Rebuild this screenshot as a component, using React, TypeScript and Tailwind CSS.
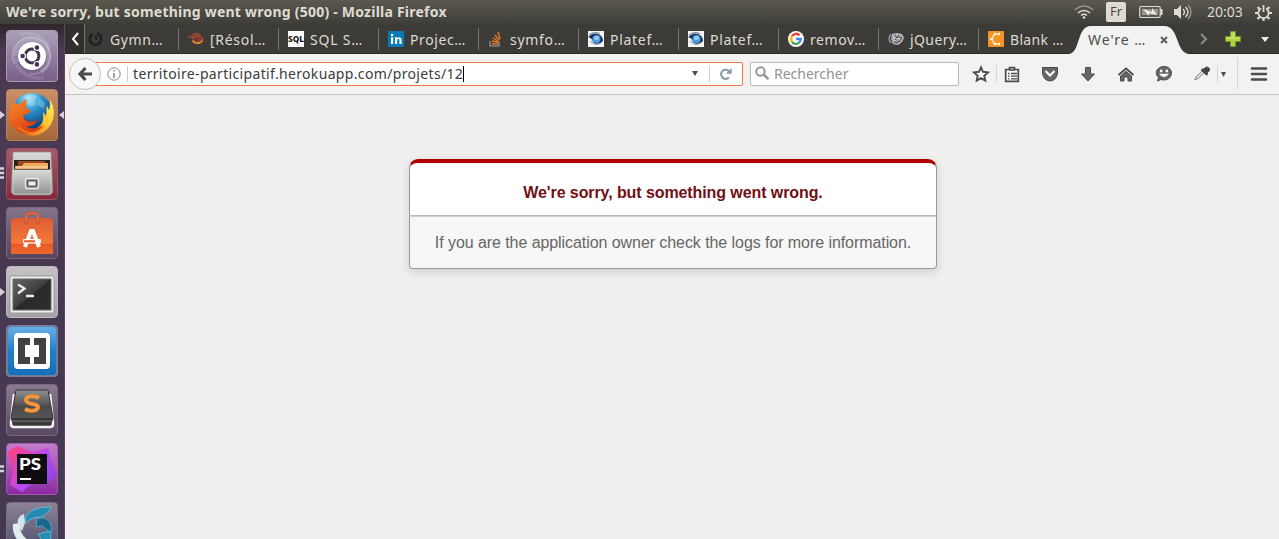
import type { ReactNode } from "react";

const uiFont = "font-['Noto_Sans','Open_Sans',sans-serif]";

function Launcher({ kind }: { kind: string }) {
  switch (kind) {
    case "ubuntu":
      return (
        <svg viewBox="0 0 52 52" className="size-[52px] shrink-0">
          <g fill="none" stroke="#fff">
            <path d="M9 26a17 17 0 0 1 31-10c6 9 3 21-5 26" strokeWidth="4" opacity=".15" />
            <path d="M8 34C2 17 16 4 30 8c10 3 15 11 14 21M44 22c2 14-8 23-20 22" strokeWidth="1.2" opacity=".28" />
            <path d="M9 28c0 13 15 22 29 20M43 21C43 8 26 0 14 5" strokeWidth="3" opacity=".12" />
          </g>
          <circle cx="26" cy="27" r="14.3" fill="#3b2b4b" opacity=".25" />
          <circle cx="26" cy="26" r="14" fill="#fff" />
          <circle cx="26" cy="26" r="6.9" fill="none" stroke="#443653" strokeWidth="3" />
          <g stroke="#fff" strokeWidth="1.2" fill="#443653">
            <circle cx="16.6" cy="26" r="2.9" />
            <circle cx="30.9" cy="17.6" r="2.9" />
            <circle cx="30.9" cy="34.4" r="2.9" />
          </g>
        </svg>
      );
    case "firefox":
      return (
        <svg viewBox="0 0 52 52" className="size-[52px] shrink-0">
          <defs>
            <radialGradient id="globe" cx=".42" cy=".12" r=".8"><stop stopColor="#a5e6f7" /><stop offset=".4" stopColor="#2b92ce" /><stop offset="1" stopColor="#0b326c" /></radialGradient>
            <linearGradient id="fox" x2=".6" y2="1"><stop stopColor="#f18b2f" /><stop offset=".5" stopColor="#ec641d" /><stop offset="1" stopColor="#d93a10" /></linearGradient>
            <linearGradient id="tail" x1="1" x2="0" y2="1"><stop stopColor="#fff16a" /><stop offset=".45" stopColor="#f9c52c" /><stop offset="1" stopColor="#e85418" /></linearGradient>
          </defs>
          <circle cx="26" cy="25" r="21" fill="url(#globe)" />
          <path d="M18 8c4-3 11-3 14 0l-4 4 2 4-6 1-4-4zM33 9l6 5-1 6-6-4z" fill="#c5eff9" opacity=".3" />
          <path d="M44 11c7 10 4 25-5 31-9 8-23 5-29-3 12 4 22 2 26-5 2-4 1-8 1-11l3 4c1-4 0-8 1-10l2 4c1-3 1-6 1-10z" fill="url(#tail)" />
          <path d="M8 12c1 2 3 3 5 3 3-1 4-4 8-5-1 4-1 7-1 9 2 1 4 2 5 3-2 3-6 3-8 5 1 6 8 7 14 4-2 5-7 7-11 6 5 4 12 3 17-1-3 9-22 14-31 1C1 29 4 18 8 12z" fill="url(#fox)" />
          <path d="M18 28c1 7 9 6 13 3" fill="none" stroke="#bb3410" strokeWidth="1" />
          <path d="M12 38q13 12 27 0" fill="none" stroke="#f6982d" strokeWidth="2" opacity=".6" />
        </svg>
      );
    case "files":
      return (
        <svg viewBox="0 0 52 52" className="size-[52px] shrink-0">
          <defs><linearGradient id="cab" x2="0" y2="1"><stop stopColor="#dbdbd9" /><stop offset="1" stopColor="#929290" /></linearGradient></defs>
          <path d="M7 4h38l2 40-4 3H9l-4-3z" fill="url(#cab)" stroke="#888" strokeWidth=".7" />
          <path d="M8 12h36v10H8z" fill="#272321" /><path d="M12 13h27v8H12z" fill="#a2451f" />
          <path d="M9 18h7l2-3h24v6H9z" fill="#efaa63" /><path d="M10 19h32" stroke="#ffe0ad" />
          <path d="M7 22h38v24H7z" fill="url(#cab)" stroke="#ddd" strokeWidth=".7" />
          <rect x="19.5" y="30.5" width="13" height="10" rx="2" fill="#777" stroke="#eee" strokeWidth="1.3" />
          <rect x="22" y="33" width="8" height="5" rx="1" fill="#eee" stroke="#555" />
        </svg>
      );
    case "software":
      return (
        <svg viewBox="0 0 52 52" className="size-[52px] shrink-0">
          <defs><linearGradient id="bag" x2="0" y2="1"><stop stopColor="#dc5d35" /><stop offset=".7" stopColor="#f47a39" /><stop offset=".72" stopColor="#ea5725" /><stop offset="1" stopColor="#ee692d" /></linearGradient></defs>
          <path d="M5 13l3-2h36l3 2v34H5z" fill="url(#bag)" />
          <path d="M20 17V9c0-4 12-4 12 0v8" fill="none" stroke="#c84d28" strokeWidth="3" />
          <path d="M20 16V9c0-4 12-4 12 0v7" fill="none" stroke="#f18a60" strokeWidth="1" />
          <path d="M19 40l6-16h2l6 16" fill="none" stroke="#fff" strokeWidth="4" />
          <rect x="17" y="32" width="18" height="4.5" rx="1" fill="#fff" /><path d="M18 34.2h11" stroke="#e65829" strokeWidth="2" />
        </svg>
      );
    case "terminal":
      return (
        <svg viewBox="0 0 52 52" className="size-[52px] shrink-0">
          <defs><linearGradient id="term" x2="1" y2="1"><stop stopColor="#666" /><stop offset=".5" stopColor="#3d3d3d" /><stop offset=".51" stopColor="#292929" /><stop offset="1" stopColor="#303030" /></linearGradient></defs>
          <rect x="4" y="10" width="44" height="37" rx="2" fill="#ededeb" stroke="#999" />
          <rect x="7" y="13" width="38" height="31" fill="url(#term)" stroke="#666" />
          <path d="M12 18.5l6.5 4-6.5 5M20 30h8" stroke="#eee" strokeWidth="2.3" fill="none" />
        </svg>
      );
    case "brackets":
      return (
        <svg viewBox="0 0 52 52" className="size-[52px] shrink-0">
          <defs><linearGradient id="blue" x2="0" y2="1"><stop stopColor="#68afe5" /><stop offset=".5" stopColor="#1f7fcb" /><stop offset="1" stopColor="#176fb8" /></linearGradient></defs>
          <rect x="2" y="2" width="48" height="48" rx="4" fill="url(#blue)" />
          <rect x="8" y="8" width="36" height="36" rx="4" fill="#fff" />
          <path d="M12 13h12v7h-5v12h5v7H12zM40 13H28v7h5v12h-5v7h12z" fill="#424242" />
        </svg>
      );
    case "sublime":
      return (
        <svg viewBox="0 0 52 52" className="size-[52px] shrink-0">
          <defs><linearGradient id="key" x2="0" y2="1"><stop stopColor="#929292" /><stop offset=".5" stopColor="#4c4c4c" /><stop offset="1" stopColor="#595959" /></linearGradient></defs>
          <path d="M8 10L5 40q0 3 3 3h36q3 0 3-3l-3-30" fill="#393939" stroke="#f3f3f3" strokeWidth="2.6" />
          <path d="M10 6h32l5 28-2 5H7l-2-5z" fill="url(#key)" stroke="#333" />
          <path d="M6 35h40" stroke="#353535" strokeWidth="2" />
          <path d="M33 14c-5-3-13-2-13 2 0 5 12 3 12 7 0 4-8 5-13 2" fill="none" stroke="#f7943a" strokeWidth="4" />
        </svg>
      );
    case "phpstorm":
      return (
        <svg viewBox="0 0 52 52" className="size-[52px] shrink-0">
          <defs><linearGradient id="storm" x2="1" y2=".7"><stop stopColor="#ff4268" /><stop offset=".35" stopColor="#e341bd" /><stop offset=".6" stopColor="#b64cf2" /><stop offset="1" stopColor="#8c43ed" /></linearGradient></defs>
          <path d="M2 9l9-6 15 6 16-4 3 12 5 15-10 9-10-4-14 12-12-7 3-14z" fill="url(#storm)" />
          <rect x="11" y="11" width="30" height="30" fill="#100d12" />
          <text x="13" y="26.5" fill="#fff" fontFamily="Lato, sans-serif" fontWeight="900" fontSize="17" textLength="22" lengthAdjust="spacingAndGlyphs">PS</text>
          <path d="M14 36h11" stroke="#fff" strokeWidth="2" />
        </svg>
      );
    default:
      return (
        <svg viewBox="0 0 52 52" className="size-[52px] shrink-0">
          <path d="M19 17C22 7 33 5 45 5c-1 4-5 8-10 10-6 0-11 2-15 6z" fill="#258bb2" stroke="#72b7d1" />
          <path d="M18 12C10 15 10 22 16 29l3-8z" fill="#d0e3e9" />
          <path d="M7 22c-1 10 4 18 12 22l4-5c-7-5-10-11-9-18z" fill="#e1ecef" />
          <path d="M31 17c10-4 16 4 14 14l-9-7-6 1z" fill="#1b668f" stroke="#4fa6c6" />
          <path d="M44 29c3 9-2 16-8 20 1-7 0-12-4-17z" fill="#248db5" stroke="#65b4cc" />
        </svg>
      );
  }
}

const launchers = [
  { kind: "ubuntu", bg: "bg-linear-to-b from-[#aaa0b9] to-[#79608b] border-[#a99cb5]", left: 0 },
  { kind: "firefox", bg: "bg-linear-to-b from-[#c69068] to-[#a66738] border-[#b58562]", left: 1 },
  { kind: "files", bg: "bg-linear-to-b from-[#a55b6c] to-[#83283a] border-[#9e5163]", left: 3 },
  { kind: "software", bg: "bg-linear-to-b from-[#85758b] to-[#56455e] border-[#766680]", left: 0 },
  { kind: "terminal", bg: "bg-linear-to-b from-[#c5c2c6] to-[#a4a1a5] border-[#bcb8be]", left: 1 },
  { kind: "brackets", bg: "bg-[#687fa3] border-[#7d7d9f]", left: 0 },
  { kind: "sublime", bg: "bg-linear-to-b from-[#89798f] to-[#5b4863] border-[#78677f]", left: 0 },
  { kind: "phpstorm", bg: "bg-linear-to-b from-[#c37bcc] to-[#8b2ba2] border-[#a858b5]", left: 2 },
  { kind: "swirl", bg: "bg-linear-to-b from-[#8c8394] to-[#4b4d6b] border-[#776f84]", left: 0 },
];

function Sidebar() {
  return (
    <aside className="relative flex w-[65px] shrink-0 flex-col items-center gap-[7px] overflow-hidden border-r border-[#64455f] bg-linear-to-b from-[#32262d] via-[#4a3951] via-[5%] to-[#453852] pr-px pt-[6px]">
      {launchers.map(({ kind, bg, left }) => (
        <div key={kind} className="relative flex w-full shrink-0 justify-center">
          <div className={`flex size-[52px] items-center justify-center overflow-hidden rounded-[4px] border ${bg}`}><Launcher kind={kind} /></div>
          {left === 1 && <svg className="absolute left-0 top-[22px]" width="5" height="8"><path d="M0 0l5 4-5 4z" fill="#d7d0d8" /></svg>}
          {left > 1 && <svg className="absolute left-0 top-[19px]" width="5" height="12"><path d={left === 3 ? "M0 1.5h4M0 6h4M0 10.5h4" : "M0 4.5h4M0 9h4"} stroke="#d7d0d8" strokeWidth="2.3" /></svg>}
          {kind === "firefox" && <svg className="absolute -right-px top-[22px]" width="5" height="8"><path d="M5 0L0 4l5 4z" fill="#d7d0d8" /></svg>}
        </div>
      ))}
    </aside>
  );
}

function Favicon({ kind }: { kind: string }) {
  const marks: Record<string, ReactNode> = {
    gym: <><circle cx="7.5" cy="8" r="5.7" fill="none" stroke="#22211f" strokeWidth="2.8" /><path d="M7 0v8" stroke="#3c3b37" strokeWidth="4" /><path d="M8 4v5" stroke="#22211f" strokeWidth="2" /></>,
    resolved: <g fill="none" strokeWidth="1.8" strokeDasharray="2 .8"><ellipse cx="9.5" cy="8.5" rx="5" ry="4" stroke="#cf4b22" /><path d="M0 7q3-3 6 0M4 4q5-3 8 0" stroke="#a54d37" /><path d="M5 10q4 4 9 0" stroke="#f5a62c" /><path d="M7 7q4-2 5 1q-3 3-5 0" stroke="#a83d34" /></g>,
    sql: <><rect width="16" height="16" fill="#fff" /><text x="0" y="11.2" textLength="16" lengthAdjust="spacingAndGlyphs" fill="#111" fontFamily="Noto Sans, sans-serif" fontSize="9" fontWeight="800">SQL</text></>,
    linkedin: <><rect width="16" height="16" rx="1" fill="#0879b9" /><rect x="3" y="6.2" width="2.2" height="6.8" fill="#fff" /><circle cx="4.1" cy="4" r="1.3" fill="#fff" /><path d="M7 13V6.2h2.1v1c1-1.7 4.5-1.5 4.5 1.6V13h-2.2V9.1c0-1.7-2.2-1.5-2.2.1V13z" fill="#fff" /></>,
    stack: <><path d="M2 10v5h9v-5" fill="none" stroke="#aaa69f" strokeWidth="1.1" /><path d="M4 12.7h6M4 10l6 1M5 7l5 3M7 4l4 5M10 1l2 7" stroke="#e87722" strokeWidth="1.4" /></>,
    plateforme: <><rect width="16" height="16" fill="#f5f5f5" /><path d="M1 10q4 5 9 4 4-1 5-5" fill="#b9bdc5" /><path d="M0 6Q5 1 10 3q5 2 5 7-4 4-9 2-2-5-6-6" fill="#18315f" /><circle cx="8.5" cy="8" r="4" fill="#459de6" /><ellipse cx="8.5" cy="7" rx="2.5" ry="2" fill="#93cff6" /><path d="M1 4Q7 0 12 3" stroke="#848ea2" strokeWidth="1.2" fill="none" /></>,
    google: <><circle cx="8" cy="8" r="8" fill="#fff" /><g fill="none" strokeWidth="2.4"><path d="M4 5.2a4.8 4.8 0 0 1 7.6-.9" stroke="#e94235" /><path d="M4 5.2a5 5 0 0 0 0 5.8" stroke="#fbbc05" /><path d="M4 11a4.8 4.8 0 0 0 7.2.5" stroke="#34a853" /><path d="M11.2 11.5A5 5 0 0 0 12.8 8H8" stroke="#4285f4" /></g></>,
    jquery: <><path d="M4 3l5-1 5 1 2 4-2 4-4 3-5-1-2-5z" fill="#b4b8bd" /><path d="M3 3q-4 5 0 9M6 4q-3 5 0 9" fill="none" stroke="#a4a8ac" strokeWidth="1.2" /><path d="M7 4l2 3 2-3M7 8l4 3 3-4M6 11l4 1M11 6l3 1" stroke="#343a43" strokeWidth="1" fill="none" /><circle cx="9" cy="9" r="1" fill="#bc8f5b" /></>,
    blank: <><rect width="16" height="16" rx="1" fill="#f79420" /><path d="M10 3H7L5 5v2L3 8l2 1v2l2 2h3" stroke="#fff" strokeWidth="1.1" fill="none" /><g fill="#fff"><circle cx="7" cy="3" r="1.2" /><circle cx="11" cy="3" r="1.2" /><circle cx="3" cy="8" r="1.2" /><circle cx="11" cy="13" r="1.2" /><circle cx="7" cy="13" r="1.2" /></g></>,
  };
  return <svg width="16" height="16" className="shrink-0 overflow-visible">{marks[kind]}</svg>;
}

const tabs = [
  ["resolved", "[Résol…", "tracking-[0.7px]"],
  ["sql", "SQL S…", "tracking-[0.8px]"],
  ["linkedin", "Projec…", "tracking-[0.6px]"],
  ["stack", "symfo…", "tracking-[0.7px]"],
  ["plateforme", "Platef…", "tracking-[0.7px]"],
  ["plateforme", "Platef…", "tracking-[0.7px]"],
  ["google", "remov…", "tracking-[0.6px]"],
  ["jquery", "jQuery…", "tracking-[0.4px]"],
  ["blank", "Blank …", "tracking-[0.3px]"],
];

function TabBar() {
  return (
    <div className="flex h-[30px] shrink-0 border-b border-[#292824] bg-[#3c3b37] pt-px text-[14px] text-[#dfdbd2]">
      <div className="-mt-px flex w-5 shrink-0 items-center justify-center border-r border-[#77756f] bg-[#302f2c] pt-px"><svg width="8" height="14"><path d="M7 1L2 7l5 6" fill="none" stroke="#fff" strokeWidth="2" /></svg></div>
      <div className="flex w-[93px] shrink-0 items-center gap-[6px] pl-[3px]"><Favicon kind="gym" /><span className="tracking-[0.6px]">Gymn…</span></div>
      {tabs.map(([kind, label, track], i) => (
        <div key={i} className={`flex shrink-0 items-center ${i === 8 ? "w-[90px]" : "w-[100px]"}`}>
          <span className="h-[22px] w-px bg-[#77756f]" />
          <span className="ml-[9px]"><Favicon kind={kind} /></span>
          <span className={`ml-[6px] whitespace-nowrap ${track}`}>{label}</span>
        </div>
      ))}
      <div className="relative -mt-px -mb-px flex w-[122px] shrink-0 items-center text-[#4c4c4c]">
        <svg className="absolute inset-0" width="122" height="30"><path d="M0 30C13 30 8 2 23 2h73c16 0 11 28 26 28z" fill="#f3f2f1" /></svg>
        <span className="relative ml-5 tracking-[1px]">We're …</span>
        <svg className="absolute left-[92px] top-[12px]" width="8" height="8"><path d="M1 1l6 6M7 1L1 7" stroke="#666" strokeWidth="2.2" /></svg>
      </div>
      <div className="flex flex-1 items-center justify-between px-[10px]">
        <svg width="8" height="12"><path d="M1 1l5 5-5 5" stroke="#8d8c86" strokeWidth="2" fill="none" /></svg>
        <svg width="16" height="16" className="-ml-1"><path d="M5.5.5h5v5h5v5h-5v5h-5v-5h-5v-5h5z" fill="#abd342" stroke="#6f9825" /><path d="M6 2h4v4h4v2H2V6h4z" fill="#d4ec72" opacity=".5" /></svg>
        <svg width="8" height="5"><path d="M0 0h8L4 5z" fill="#eee" /></svg>
      </div>
    </div>
  );
}

function Toolbar() {
  return (
    <div className="relative flex h-[41px] shrink-0 items-center border-b border-[#c8c5c1] bg-[#f3f2f1] pb-px">
      <div className="z-10 ml-1 flex size-8 shrink-0 items-center justify-center rounded-full border border-[#c5c1bc] bg-[#f8f7f7]"><svg width="16" height="16"><path d="M8.5 2L3 8l5.5 6M3 8h12" fill="none" stroke="#4b4b4b" strokeWidth="3.2" /></svg></div>
      <div className="-ml-2 flex h-6 w-[650px] shrink-0 items-center rounded-r-[2px] border border-[#f07746] bg-white pl-[13px]">
        <svg width="14" height="14"><circle cx="7" cy="7" r="6.2" fill="none" stroke="#888" /><path d="M7 6v5M7 3v1.5" stroke="#888" strokeWidth="1.5" /></svg>
        <span className="ml-[6px] h-4 w-px bg-[#ccc]" />
        <span className="ml-[5px] whitespace-nowrap text-[14px] tracking-[0.34px] text-[#3c3c3c]">territoire-participatif.herokuapp.com/projets/12</span>
        <span className="h-4 w-px bg-black" />
        <svg className="ml-auto mr-[11px]" width="6" height="5"><path d="M0 0h6L3 5z" fill="#4b4b4b" /></svg>
        <span className="mr-[10px] h-4 w-px bg-[#ccc]" />
        <svg className="mr-[10px]" width="12" height="12"><path d="M9 9.5a4.6 4.6 0 1 1 .3-6" fill="none" stroke="#8999a5" strokeWidth="2" /><path d="M6 5.8h5.6V0z" fill="#8999a5" /></svg>
      </div>
      <div className="ml-[7px] flex h-6 w-[209px] shrink-0 items-center rounded-[2px] border border-[#bdb9b4] bg-white pl-1 text-[14px] text-[#929292]">
        <svg width="15" height="15"><circle cx="5.5" cy="5.5" r="4.2" fill="none" stroke="#969696" strokeWidth="2" /><path d="M8.5 8.5l5 4.6" stroke="#969696" strokeWidth="2.4" /></svg>
        <span className="ml-1">Rechercher</span>
      </div>
      <svg width="320" height="40" viewBox="959 54 320 40" className="shrink-0">
        <g fill="#666" stroke="#4b4b4b" strokeWidth="1">
          <path d="M981 67.3l2 4.5 5 .6-3.7 3.4 1 4.8-4.3-2.4-4.3 2.4 1-4.8-3.7-3.4 5-.6z" fill="#fafafa" strokeWidth="1.9" />
          <path d="M1005.7 69.5h3.8v-1.8h5v1.8h3.8v11.8h-12.6z" fill="#f8f8f8" strokeWidth="1.7" /><path d="M1009 70h6M1008 73.5h1.5M1011 73.5h6M1008 76.2h1.5M1011 76.2h6M1008 78.9h1.5M1011 78.9h6" strokeWidth="1.3" />
          <path d="M1042.5 67.5h15v5.5q-1 7.5-7.5 8-6.5-.5-7.5-8z" /><path d="M1045.5 71l4.5 4.5 4.5-4.5" stroke="#f8f8f8" strokeWidth="2.2" fill="none" />
          <path d="M1085.5 67.5h5v6.5h4l-6.5 7-6.5-7h4z" />
          <path d="M1118.5 75l7.5-6.5 7.5 6.5" fill="none" strokeWidth="1.8" /><path d="M1120.5 76l5.5-4.7 5.5 4.7v5h-3.5v-4h-4v4h-3.5z" />
          <path d="M1164 66.5c10 0 10 13 0 13.5l-3-.5-3.5 1.5 1-3.5c-5-5-1-11 5.5-11z" /><g stroke="none"><circle cx="1161.2" cy="71" r="1.4" fill="#f8f8f8" /><circle cx="1166.8" cy="71" r="1.4" fill="#f8f8f8" /><path d="M1159 73.7h10q-5 7-10 0z" fill="#f8f8f8" /></g>
          <path d="M1194.8 80l1.2-3 6-6 2 2-6 5.5z" fill="#ddd" stroke="#888" /><path d="M1202 69l2 0 2-2q4 0 3.5 3.5l-2 1.8v2l-1 1-5-5z" fill="#444" />
          <path d="M1221 72h5l-2.5 5z" fill="#4b4b4b" stroke="none" />
          <path d="M1252 68.5h14M1252 74h14M1252 79.5h14" strokeWidth="2.6" strokeLinecap="round" />
        </g>
        <path d="M996.5 65v18M1217.5 65v18M1237.5 57v33" stroke="#d6d3d1" />
      </svg>
    </div>
  );
}

export default function App() {
  return (
    <div className={`flex h-[539px] w-[1279px] flex-col overflow-hidden ${uiFont}`}>
      <header className="flex h-6 shrink-0 items-center justify-between bg-linear-to-b from-[#5b594e] to-[#3e3d38] pl-[6px] text-[#dfdbd2]">
        <span className="whitespace-nowrap pb-px text-[14px] font-bold tracking-[0.23px]">We're sorry, but something went wrong (500) - Mozilla Firefox</span>
        <div className="flex items-center">
          <svg width="20" height="14" className="mr-[12px]"><g fill="none" strokeWidth="1.5"><path d="M1 5q9-8 18 0" stroke="#99958a" /><path d="M4 8q6-5 12 0M7 10.5q3-2.5 6 0" stroke="#dfdbd2" /></g><circle cx="10" cy="12.5" r="1.3" fill="#dfdbd2" /></svg>
          <div className="mr-[12px] flex h-5 w-5 items-center justify-center rounded-[2px] bg-[#dfdbd2] text-[13px] text-[#4b4a43]">Fr</div>
          <svg width="25" height="14" className="mr-[11px]"><rect x="1.7" y="1.5" width="20.5" height="11" rx="1.5" fill="#5b594f" stroke="#dfdbd2" strokeWidth="1.2" /><rect x="4" y="4" width="16" height="6" fill="#99968c" /><path d="M22.5 4h2v6h-2" fill="#dfdbd2" /><path d="M5 4l9 3V3l5 7-8-2v3z" fill="#f0ede7" /></svg>
          <svg width="20" height="16" className="mr-[13px]"><path d="M0 5h3l4-4v14l-4-4H0z" fill="#dfdbd2" /><g fill="none" strokeWidth="1.4"><path d="M9 5q3 3 0 6M11.5 3q5 5 0 10" stroke="#dfdbd2" /><path d="M14 1q6 7 0 14" stroke="#99958a" /></g></svg>
          <span className="w-[48px] whitespace-nowrap pb-px text-[14px]">20:03</span>
          <svg width="17" height="17" className="mr-[7px]"><circle cx="8.5" cy="9" r="5.2" fill="none" stroke="#dfdbd2" strokeWidth="1.8" /><g stroke="#dfdbd2" strokeWidth="2.2"><path d="M0 9h3M14 9h3M8.5 14v3M2.5 3l2 2M14.5 3l-2 2M2.5 15l2-2M14.5 15l-2-2" /></g><path d="M8.5 1v7" stroke="#504f46" strokeWidth="5" /><path d="M8.5 1v7" stroke="#dfdbd2" strokeWidth="1.8" /></svg>
        </div>
      </header>
      <div className="flex min-h-0 flex-1">
        <Sidebar />
        <div className="flex min-w-0 flex-1 flex-col">
          <TabBar />
          <Toolbar />
          <main className="flex flex-1 justify-center bg-[#efefef] pl-0.5 pt-16 font-['Liberation_Sans',Arial,sans-serif] text-[16px]">
            <div className="h-[110px] w-[528px] rounded-t-[9px] rounded-b-[4px] text-center shadow-[0_3px_8px_rgba(50,50,50,0.17)]">
              <div className="flex h-[57px] items-center justify-center rounded-t-[9px] border border-t-4 border-[#999] border-t-[#b00100] border-b-[#bbb] bg-white pt-[8px] font-bold tracking-[-0.09px] text-[#730e15]">We're sorry, but something went wrong.</div>
              <div className="flex h-[53px] items-center justify-center rounded-b-[4px] border border-[#999] border-t-[#d0d0d0] bg-[#f7f7f7] tracking-[-0.07px] text-[#666]">If you are the application owner check the logs for more information.</div>
            </div>
          </main>
        </div>
      </div>
    </div>
  );
}
